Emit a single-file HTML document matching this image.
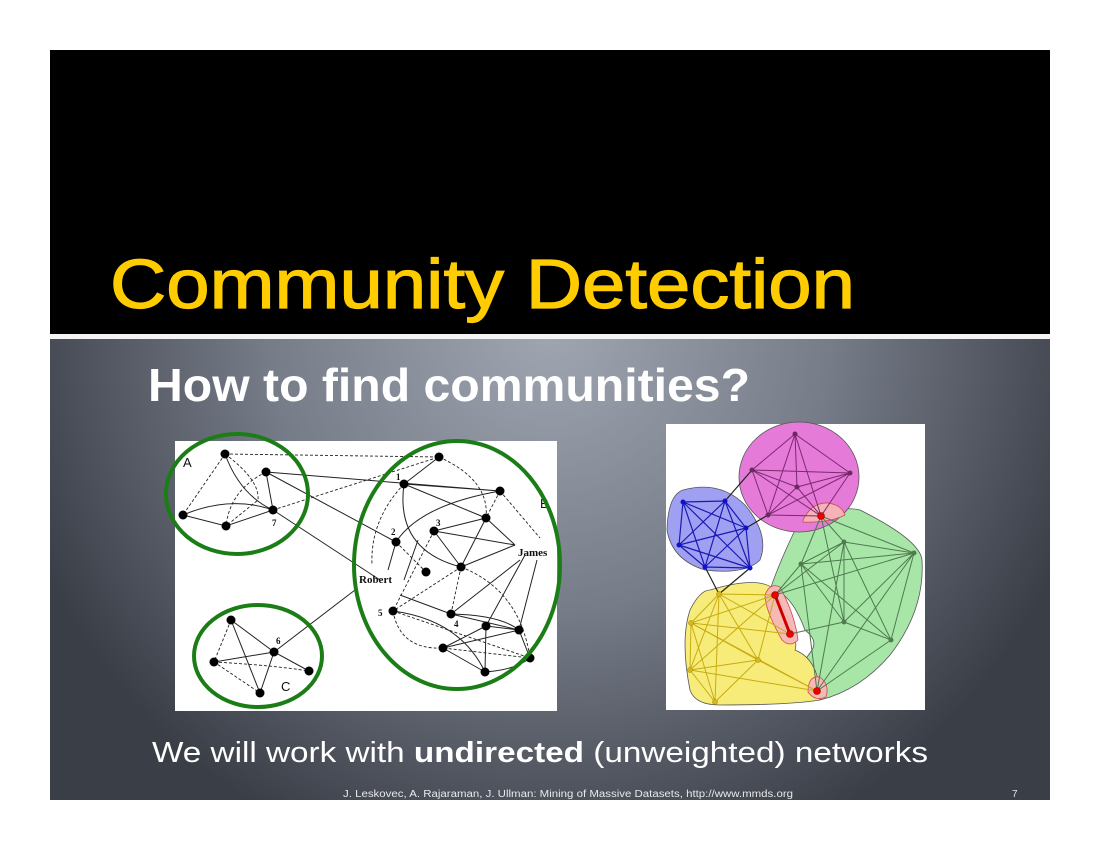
<!DOCTYPE html>
<html><head><meta charset="utf-8"><style>
html,body{margin:0;padding:0;background:#fff;}
body{width:1100px;height:850px;position:relative;overflow:hidden;}
</style></head><body>
<svg width="1100" height="850" viewBox="0 0 1100 850" xmlns="http://www.w3.org/2000/svg" style="position:absolute;left:0;top:0">
<defs>
<radialGradient id="bg" cx="550" cy="330" r="560" gradientUnits="userSpaceOnUse">
<stop offset="0" stop-color="#a0a6b1"/><stop offset="0.5" stop-color="#767c88"/><stop offset="1" stop-color="#3a3e47"/>
</radialGradient>
</defs>
<rect x="50" y="50" width="1000" height="284" fill="#000"/>
<rect x="50" y="334" width="1000" height="5" fill="#f4f4f4"/>
<rect x="50" y="339" width="1000" height="461" fill="url(#bg)"/>
<text x="110" y="308" fill="#ffcc00" stroke="#ffcc00" stroke-width="1.2" font-family="Liberation Sans, sans-serif" font-size="70" textLength="745" lengthAdjust="spacingAndGlyphs">Community Detection</text>
<text x="148" y="401" fill="#fff" font-family="Liberation Sans, sans-serif" font-weight="bold" font-size="46" textLength="602" lengthAdjust="spacingAndGlyphs">How to find communities?</text>
<text x="152" y="762" fill="#fff" font-family="Liberation Sans, sans-serif" font-size="29" textLength="776" lengthAdjust="spacingAndGlyphs">We will work with <tspan font-weight="bold">undirected</tspan> (unweighted) networks</text>
<text x="343" y="797" fill="#e8e8e8" font-family="Liberation Sans, sans-serif" font-size="10" textLength="450" lengthAdjust="spacingAndGlyphs">J. Leskovec, A. Rajaraman, J. Ullman: Mining of Massive Datasets, http://www.mmds.org</text>
<text x="1012" y="797" fill="#e8e8e8" font-family="Liberation Sans, sans-serif" font-size="10">7</text>

<!-- left image -->
<rect x="175" y="441" width="382" height="270" fill="#fff"/>
<g stroke="#222" stroke-width="1" fill="none">
<path d="M225 454 Q240 495 273 510 M266 472 L273 510 M183 515 L226 526 L273 510 M183 515 Q230 495 273 510 M266 472 L500 491 M266 472 L396 542 M273 510 L380 580 M274 652 L355 590 M404 484 L439 457 M404 484 L500 491 M404 484 L486 518 M404 484 Q395 550 461 567 M396 542 Q420 505 500 491 M396 542 L388 570 M434 531 L486 518 M434 531 L461 567 M434 531 L515 545 M486 518 L461 567 M486 518 L515 545 M461 567 L515 545 M404 580 L418 540 M400 595 L451 614 M451 614 L520 560 M451 614 L519 630 M451 614 Q500 615 519 630 M486 626 L519 630 M486 626 L525 555 M486 626 L485 672 M486 626 L443 648 M519 630 L537 560 M519 630 L530 658 M443 648 L519 630 M443 648 L485 672 M393 611 Q460 620 485 672 M485 672 Q515 670 530 658 M231 620 L274 652 L309 671 M231 620 L260 693 L274 652 M214 662 L274 652"/>
</g>
<g stroke="#222" stroke-width="0.9" fill="none" stroke-dasharray="3,2">
<path d="M225 454 L439 457 M225 454 L183 515 M225 454 Q260 480 258 500 L226 526 M266 472 Q230 490 226 526 M273 510 L439 457 M396 542 L426 572 M404 484 Q370 520 372 565 M439 457 Q490 480 486 518 M500 491 L486 518 M500 491 L540 538 M434 531 L393 611 M461 567 L393 611 M461 567 L451 614 M461 567 Q520 590 530 658 M393 611 Q400 650 443 648 L530 658 M393 611 L530 658 M231 620 L214 662 L260 693 M214 662 Q270 665 309 671"/>
</g>
<g fill="#000">
<circle cx="225" cy="454" r="4.5"/><circle cx="266" cy="472" r="4.5"/><circle cx="183" cy="515" r="4.5"/><circle cx="226" cy="526" r="4.5"/><circle cx="273" cy="510" r="4.5"/>
<circle cx="439" cy="457" r="4.5"/><circle cx="404" cy="484" r="4.5"/><circle cx="500" cy="491" r="4.5"/><circle cx="486" cy="518" r="4.5"/><circle cx="434" cy="531" r="4.5"/><circle cx="396" cy="542" r="4.5"/><circle cx="426" cy="572" r="4.5"/><circle cx="461" cy="567" r="4.5"/>
<circle cx="393" cy="611" r="4.5"/><circle cx="451" cy="614" r="4.5"/><circle cx="486" cy="626" r="4.5"/><circle cx="519" cy="630" r="4.5"/><circle cx="443" cy="648" r="4.5"/><circle cx="485" cy="672" r="4.5"/><circle cx="530" cy="658" r="4.5"/>
<circle cx="231" cy="620" r="4.5"/><circle cx="274" cy="652" r="4.5"/><circle cx="214" cy="662" r="4.5"/><circle cx="309" cy="671" r="4.5"/><circle cx="260" cy="693" r="4.5"/>
</g>
<g font-family="Liberation Serif, serif" font-weight="bold" fill="#111">
<text x="396" y="480" font-size="9">1</text><text x="391" y="535" font-size="9">2</text><text x="436" y="526" font-size="9">3</text><text x="454" y="627" font-size="9">4</text><text x="378" y="616" font-size="9">5</text><text x="276" y="644" font-size="9">6</text><text x="272" y="526" font-size="9">7</text>
<text x="518" y="556" font-size="11">James</text><text x="359" y="583" font-size="11">Robert</text>
</g>
<g font-family="Liberation Sans, sans-serif" fill="#111" font-size="13">
<text x="183" y="467">A</text><text x="540" y="508">B</text><text x="281" y="691">C</text>
</g>
<g stroke="#1b7d16" stroke-width="4" fill="none">
<ellipse cx="237" cy="494" rx="71" ry="60"/>
<ellipse cx="258" cy="656" rx="64" ry="51"/>
<ellipse cx="457" cy="565" rx="103" ry="124"/>
</g>

<!-- right image -->
<rect x="666" y="424" width="259" height="286" fill="#fff"/>
<g stroke="#555" stroke-width="0.8">
<path d="M800 520 Q840 505 860 510 Q920 540 922 560 Q925 610 890 655 Q860 690 820 700 L812 680 Q800 670 805 660 L812 650 Q818 640 805 630 Q790 590 770 590 Q780 560 800 520Z" fill="#a8e6a8"/>
<path d="M710 590 Q760 575 775 590 Q800 640 795 650 Q820 660 820 700 Q790 705 720 705 Q695 705 690 690 Q680 640 690 610 Q700 590 710 590Z" fill="#f7ec7a"/>
<ellipse cx="799" cy="477" rx="60" ry="55" fill="#e57ad9"/>
<path d="M683 490 Q720 480 745 505 Q770 535 760 560 Q745 575 705 570 Q672 560 667 530 Q668 495 683 490Z" fill="#a0a0f2"/>
</g>
<g fill="#f6b7b7" stroke="#c44" stroke-width="0.8" opacity="0.95">
<path d="M803 520 Q812 502 828 503 Q842 505 845 515 Q830 523 803 522Z"/>
<path d="M765 595 Q770 582 780 587 Q795 615 798 640 Q790 648 782 640 Q765 610 765 595Z"/>
<path d="M808 692 Q808 675 820 677 Q830 685 826 697 Q815 702 808 692Z"/>
</g>
<g stroke="#7a2a6e" stroke-width="1" fill="none">
<path d="M795 434L752 470M795 434L850 473M795 434L797 487M795 434L768 515M795 434L821 516M752 470L850 473M752 470L797 487M752 470L768 515M752 470L821 516M850 473L797 487M850 473L768 515M850 473L821 516M797 487L768 515M797 487L821 516M768 515L821 516"/>
</g>
<g stroke="#1a1ab4" stroke-width="1.2" fill="none">
<path d="M683 502L725 501M683 502L679 545M683 502L705 567M683 502L750 568M683 502L746 528M725 501L679 545M725 501L705 567M725 501L750 568M725 501L746 528M679 545L705 567M679 545L750 568M679 545L746 528M705 567L750 568M705 567L746 528M750 568L746 528"/>
</g>
<g stroke="#4f7a4f" stroke-width="1" fill="none">
<path d="M844 542L801 564M844 542L914 553M844 542L844 622M844 542L891 640M801 564L914 553M801 564L844 622M801 564L891 640M914 553L844 622M914 553L891 640M844 622L891 640M821 516L844 542M821 516L801 564M821 516L914 553M821 516L844 622M775 595L844 542M775 595L801 564M775 595L914 553M790 634L844 622M817 691L844 542M817 691L801 564M817 691L914 553M817 691L891 640"/>
</g>
<g stroke="#c8ac10" stroke-width="1" fill="none">
<path d="M719 594L691 623M719 594L690 670M719 594L758 660M719 594L715 702M691 623L690 670M691 623L758 660M691 623L715 702M690 670L758 660M690 670L715 702M758 660L715 702M775 595L719 594M775 595L691 623M775 595L690 670M775 595L758 660M817 691L691 623M817 691L690 670M817 691L758 660M790 634L691 623M790 634L719 594"/>
</g>
<g stroke="#222" stroke-width="1.2" fill="none"><path d="M752 470L725 501M768 515L746 528M705 567L719 594M750 568L719 594"/></g>
<path d="M775 595L790 634" stroke="#c00" stroke-width="3"/>
<g fill="#6a2a60"><circle cx="795" cy="434" r="2.5"/><circle cx="752" cy="470" r="2.5"/><circle cx="850" cy="473" r="2.5"/><circle cx="797" cy="487" r="2.5"/><circle cx="768" cy="515" r="2.5"/></g>
<g fill="#1010d0"><circle cx="683" cy="502" r="2.5"/><circle cx="725" cy="501" r="2.5"/><circle cx="679" cy="545" r="2.5"/><circle cx="705" cy="567" r="2.5"/><circle cx="750" cy="568" r="2.5"/><circle cx="746" cy="528" r="2.5"/></g>
<g fill="#4f7a4f"><circle cx="844" cy="542" r="2.5"/><circle cx="801" cy="564" r="2.5"/><circle cx="914" cy="553" r="2.5"/><circle cx="844" cy="622" r="2.5"/><circle cx="891" cy="640" r="2.5"/></g>
<g fill="#d8b820" stroke="#a08010" stroke-width="0.5"><circle cx="719" cy="594" r="2.5"/><circle cx="691" cy="623" r="2.5"/><circle cx="690" cy="670" r="2.5"/><circle cx="758" cy="660" r="2.5"/><circle cx="715" cy="702" r="2.5"/></g>
<g fill="#e00" stroke="#800" stroke-width="0.6"><circle cx="821" cy="516" r="3.5"/><circle cx="775" cy="595" r="3.5"/><circle cx="790" cy="634" r="3.5"/><circle cx="817" cy="691" r="3.5"/></g>
</svg>
</body></html>
